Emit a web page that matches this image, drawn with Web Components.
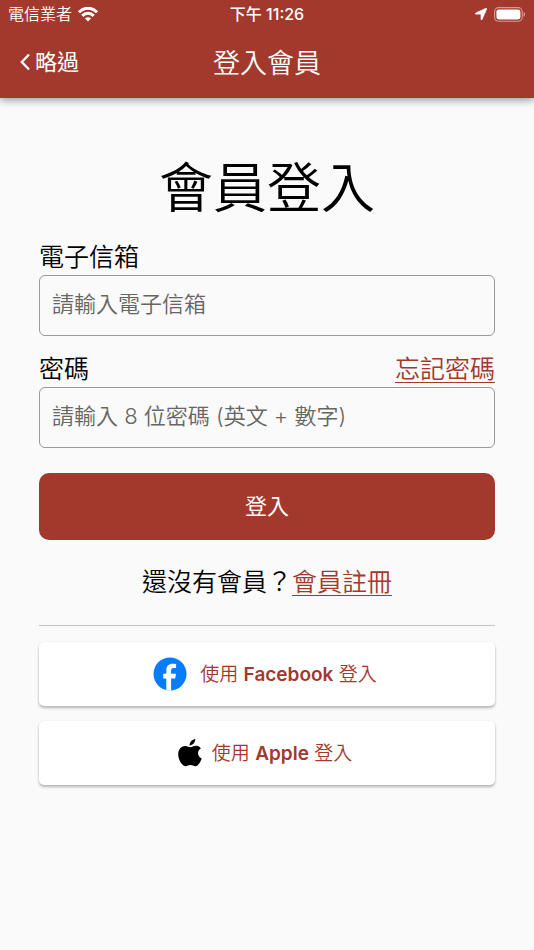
<!DOCTYPE html>
<html lang="zh-Hant">
<head>
<meta charset="utf-8">
<meta name="viewport" content="width=device-width, initial-scale=1">
<title>登入會員</title>
<style>
  :root { --brand: #a3392d; }
  body {
    margin: 0;
    min-height: 100vh;
    background: #fafafa;
    color: #000;
    font-family: Inter, "Noto Sans CJK TC", sans-serif;
    font-weight: 350;
  }
</style>
</head>
<body>
<login-page></login-page>
<script>
const define = (name, html, setup) => {
  const template = document.createElement('template');
  template.innerHTML = '<style>*{box-sizing:border-box}</style>' + html.trim();
  customElements.define(name, class extends HTMLElement {
    constructor() {
      super();
      this.attachShadow({ mode: 'open' }).append(template.content.cloneNode(true));
    }
    connectedCallback() { if (setup) setup(this, this.shadowRoot); }
  });
};

define('status-bar', `
  <style>
    :host { display: grid; grid-template-columns: 1fr auto 1fr; align-items: center; height: 28px; padding: 0 8px; font-size: 16px; line-height: 20px; }
    div { display: flex; align-items: center; gap: 6px; }
    .time { font-size: 16px; font-weight: 500; }
    .end { justify-content: flex-end; gap: 7px; }
    svg { display: block; }
  </style>
  <div><span>電信業者</span>
    <svg width="20" height="15" viewBox="0 0 20 15" fill="none" stroke="#fff" stroke-width="3"><path d="M1 5.300C6-.2 14-.2 19 5.300"/><path d="M4.300 8.900c3.300-3.400 8.100-3.400 11.400 0"/><path d="M10 14.500l-3-3.100c1.800-1.600 4.200-1.600 6 0z" fill="#fff" stroke="none"/></svg>
  </div>
  <span class="time">下午 11:26</span>
  <div class="end">
    <svg width="12" height="12" viewBox="0 0 12 12" fill="#fff"><path d="M11.200.1c.5-.2.9.2.7.7L7.200 11.500c-.3.7-1.300.6-1.300-.1V6.200H.7C0 6.200-.1 5.200.5 4.900z" stroke="#fff" stroke-width=".4"/></svg>
    <svg width="32" height="15" viewBox="0 0 32 15"><rect x=".6" y=".6" width="27.600" height="13.600" rx="4" fill="none" stroke="#fff" stroke-opacity=".5" stroke-width="1.100"/><rect x="2.400" y="2.400" width="24" height="10" rx="2.400" fill="#fff"/><path d="M29.500 5v4.800c2-.8 2-4 0-4.800" fill="#fff" fill-opacity=".5"/></svg>
  </div>
`);

define('app-header', `
  <style>
    :host { display: block; position: relative; color: #fff; background: var(--brand); box-shadow: 0 2px 8px rgba(0,0,0,.42); }
    nav { display: grid; grid-template-columns: 1fr auto 1fr; align-items: center; height: 70px; padding: 0 20px; }
    button { justify-self: start; display: flex; align-items: center; gap: 5px; padding: 0 0 2px; border: 0; background: none; color: inherit; font: inherit; font-weight: 400; font-size: 22px; line-height: 32px; cursor: pointer; }
    h2 { margin: 0; padding-top: 2px; font-weight: 350; font-size: 27px; line-height: 36px; }
  </style>
  <status-bar></status-bar>
  <nav>
    <button type="button"><svg width="10" height="18" viewBox="0 0 10 18" fill="none" stroke="#fff" stroke-width="2.300"><path d="M9 1.500L1.800 9 9 16.500"/></svg><slot name="back"></slot></button>
    <h2><slot></slot></h2>
  </nav>
`);

define('text-field', `
  <style>
    :host { display: block; font-size: 25px; line-height: 36px; }
    .top { display: flex; justify-content: space-between; }
    input { display: block; width: 100%; height: 61px; padding: 0 12px 4px; border: 1px solid #999; border-radius: 6px; background: transparent; color: inherit; font: inherit; font-size: 22px; outline-color: var(--brand); }
    input::placeholder { color: #666; opacity: 1; }
  </style>
  <div class="top"><label for="field"></label><slot></slot></div>
  <input id="field">
`, (host, root) => {
  root.querySelector('label').textContent = host.getAttribute('label');
  const input = root.querySelector('input');
  input.type = host.getAttribute('type');
  input.placeholder = host.getAttribute('placeholder');
});

define('text-link', `
  <style>
    :host { display: inline; }
    a { color: var(--brand); text-decoration: underline; text-decoration-thickness: 1px; text-underline-offset: 4px; }
  </style><a href="#"><slot></slot></a>
`);

define('primary-button', `
  <style>
    :host { display: block; }
    button { width: 100%; height: 67px; padding: 0 0 5px; border: 0; border-radius: 10px; background: var(--brand); color: #fff; font: inherit; font-weight: 400; font-size: 22px; cursor: pointer; }
  </style>
  <button type="submit"><slot></slot></button>
`);

define('social-button', `
  <style>
    :host { display: block; }
    button { display: flex; align-items: center; justify-content: center; gap: var(--gap, 13px); width: 100%; height: 64px; padding: 0 4px 0 0; border: 0; border-radius: 5px; background: #fff; color: var(--brand); box-shadow: 0 2px 3px rgba(0,0,0,.28), 0 0 2px rgba(0,0,0,.06); font: inherit; font-size: 19px; line-height: 28px; cursor: pointer; }
    span { padding-top: 2px; }
    ::slotted(svg) { display: block; }
  </style>
  <button type="button"><slot name="icon"></slot><span><slot></slot></span></button>
`);

define('login-page', `
  <style>
    :host { display: block; }
    main { padding: 51px 39px 40px; }
    h1 { margin: 0; text-align: center; font-weight: 350; font-size: 54px; line-height: 80px; }
    form { display: grid; margin-top: 10px; }
    text-field + text-field { margin-top: 15px; }
    primary-button { margin-top: 25px; }
    p { margin: 24px 0 25px; text-align: center; font-size: 25px; line-height: 36px; }
    hr { margin: 0 0 16px; border: 0; border-top: 1px solid #c4c4c4; }
    .social { display: grid; gap: 15px; }
    .apple { --gap: 10px; }
    b { font-weight: 600; }
  </style>
  <app-header><span slot="back">略過</span>登入會員</app-header>
  <main>
    <h1>會員登入</h1>
    <form>
      <text-field label="電子信箱" type="email" placeholder="請輸入電子信箱"></text-field>
      <text-field label="密碼" type="password" placeholder="請輸入 8 位密碼 (英文 + 數字)"><text-link>忘記密碼</text-link></text-field>
      <primary-button>登入</primary-button>
    </form>
    <p>還沒有會員？<text-link>會員註冊</text-link></p>
    <hr>
    <div class="social">
      <social-button>
        <svg slot="icon" width="34" height="34" viewBox="0 0 34 34"><circle cx="17" cy="17" r="16.500" fill="#087cff"/><path d="M13.300 33.500V21.500h-3.100v-4.800h3.100v-3.300c0-4.600 2.600-6.700 6.500-6.700 1.500 0 2.800.2 3.300.3v4.100h-2.200c-2.200 0-2.800 1.100-2.800 2.700v2.900h4.900l-.8 4.800h-4.100v12z" fill="#fff"/></svg>
        使用 <b>Facebook</b> 登入
      </social-button>
      <social-button class="apple">
        <svg slot="icon" width="24" height="28" viewBox="0 0 24 28"><path d="M17.300 0c.2 3-2.600 6.500-5.700 6.400C11.300 3.500 14.200.3 17.300 0zM22.800 9.600c-4.200 2.500-3.500 8.200.9 9.900-.8 2.400-3 6.700-5.200 7.500-2.200.8-3.600-.9-6-.9s-3.900 1.700-5.800 1C3.200 25.900 0 19.500.2 14.800.4 9.800 3.600 6.900 7.200 6.900c2.200 0 3.900 1.300 5.200 1.300 1.300 0 3.400-1.500 6-1.400 1.900.1 3.500 1 4.400 2.800z"/></svg>
        使用 <b>Apple</b> 登入
      </social-button>
    </div>
  </main>
`);
</script>
</body>
</html>
